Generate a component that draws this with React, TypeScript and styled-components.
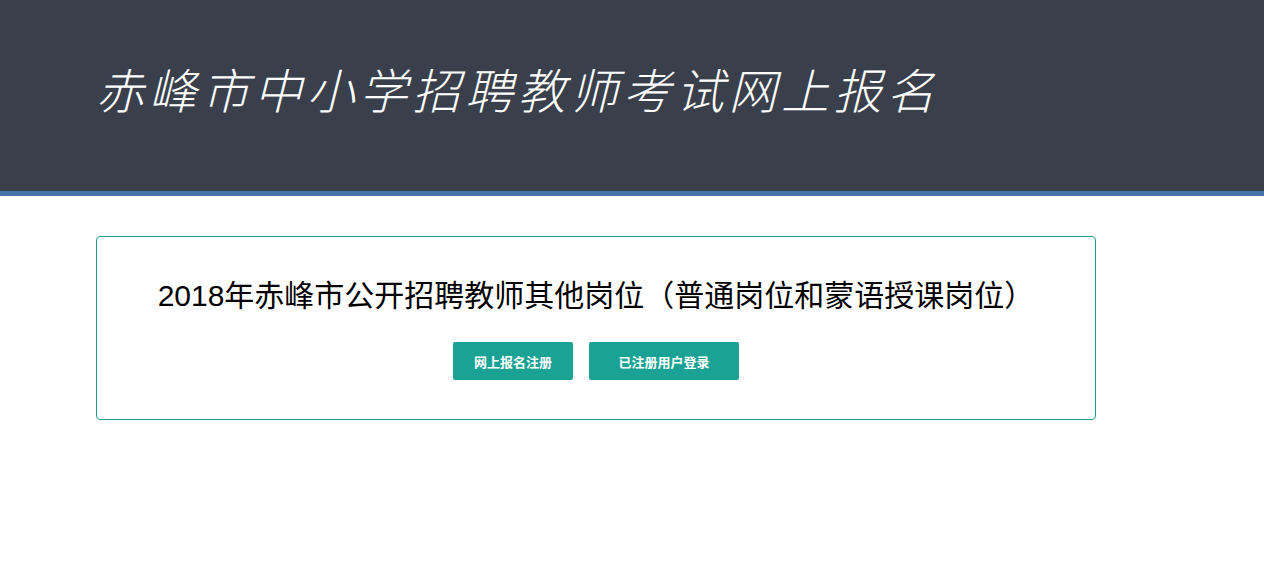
import React from "react";
import styled, { createGlobalStyle } from "styled-components";

const Global = createGlobalStyle`
  html, body { margin: 0; padding: 0; background: #fff; }
  body { font-family: "Liberation Sans", "Noto Sans CJK SC", sans-serif; color: #000; }
`;

const Header = styled.header`
  height: 191px;
  background: #3a3f4c;
  border-bottom: 5px solid #4373a8;
  padding: 0 96px;
  overflow: hidden;
`;

const SiteTitle = styled.h1`
  margin: 0;
  padding-top: 53px;
  font-family: "Noto Sans CJK SC", sans-serif;
  font-size: 48px;
  line-height: 70px;
  font-weight: 300;
  letter-spacing: 4.7px;
  white-space: nowrap;
  color: #fff;
  font-style: italic;
`;

const Main = styled.main`
  width: 1000px;
  margin: 40px 0 0 96px;
`;

const Card = styled.section`
  box-sizing: border-box;
  height: 184px;
  border: 1px solid #1a9f8f;
  border-radius: 4px;
  padding-top: 39px;
  text-align: center;
`;

const CardTitle = styled.h2`
  margin: 0;
  font-size: 30px;
  line-height: 40px;
  font-weight: 400;
  color: #000;
`;

const Actions = styled.div`
  display: flex;
  justify-content: center;
  gap: 16px;
  margin-top: 26px;
  padding-right: 0;
`;

const Button = styled.a<{ $w: number }>`
  display: flex;
  align-items: center;
  justify-content: center;
  box-sizing: border-box;
  width: ${(p) => p.$w}px;
  height: 38px;
  background: #1aa294;
  border-radius: 2px;
  color: #fff;
  font-size: 13px;
  font-weight: 700;
  text-decoration: none;
  cursor: pointer;
`;

export default function App() {
  return (
    <>
      <Global />
      <Header>
        <SiteTitle>赤峰市中小学招聘教师考试网上报名</SiteTitle>
      </Header>
      <Main>
        <Card>
          <CardTitle>2018年赤峰市公开招聘教师其他岗位（普通岗位和蒙语授课岗位）</CardTitle>
          <Actions>
            <Button $w={120}>网上报名注册</Button>
            <Button $w={150}>已注册用户登录</Button>
          </Actions>
        </Card>
      </Main>
    </>
  );
}
